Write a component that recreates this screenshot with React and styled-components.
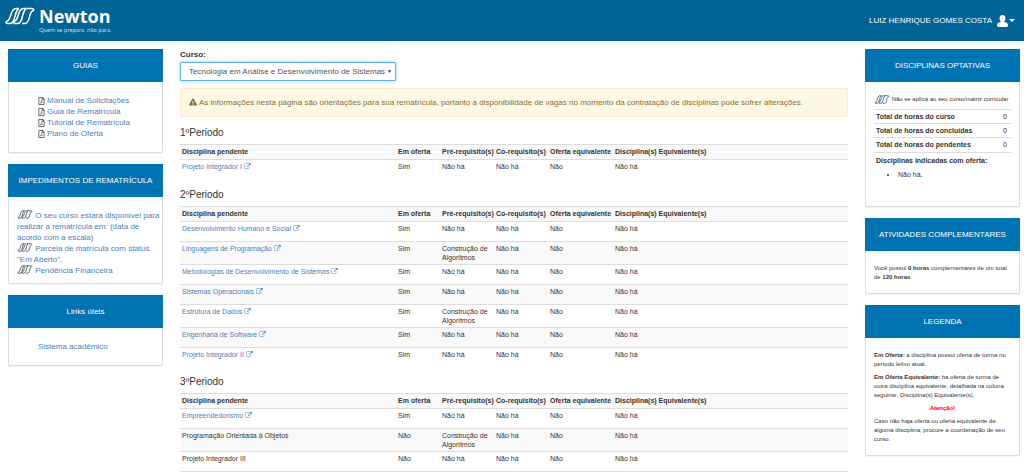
import React from "react";
import styled, { createGlobalStyle } from "styled-components";
import { FaExclamationTriangle, FaRegFilePdf } from "react-icons/fa";

const PERIODS = [
  {
    title: "1ºPeriodo",
    rows: [{ name: "Projeto Integrador I", offered: true }],
  },
  {
    title: "2ºPeriodo",
    rows: [
      { name: "Desenvolvimento Humano e Social", offered: true },
      {
        name: "Linguagens de Programação",
        offered: true,
        requires: "Construção de Algoritmos",
      },
      { name: "Metodologias de Desenvolvimento de Sistemas", offered: true },
      { name: "Sistemas Operacionais", offered: true },
      {
        name: "Estrutura de Dados",
        offered: true,
        requires: "Construção de Algoritmos",
      },
      { name: "Engenharia de Software", offered: true },
      { name: "Projeto Integrador II", offered: true },
    ],
  },
  {
    title: "3ºPeriodo",
    rows: [
      { name: "Empreendedorismo", offered: true },
      {
        name: "Programação Orientada à Objetos",
        offered: false,
        requires: "Construção de Algoritmos",
      },
      { name: "Projeto Integrador III", offered: false },
    ],
  },
];

const GUIDES = [
  "Manual de Solicitações",
  "Guia de Rematrícula",
  "Tutorial de Rematrícula",
  "Plano de Oferta",
];

const BLOCKS = [
  "O seu curso estará disponível para realizar a rematrícula em: (data de acordo com a escala)",
  'Parcela de matrícula com status "Em Aberto".',
  "Pendência Financeira",
];

const HOURS = [
  ["Total de horas do curso", 0],
  ["Total de horas do concluídas", 0],
  ["Total de horas do pendentes", 0],
];

const NewtonMark = () => (
  <svg viewBox="0 0 60 36" fill="none" stroke="currentColor" aria-hidden="true">
    <path d="M5 33 C1 33 1 29 5 28 C13 25 10 3 22 3 H28 C18 7 22 33 10 33 Z" />
    <path d="M20 33 C16 33 17 29 20 28 C28 25 25 3 37 3 H43 C33 7 37 33 25 33 Z" />
    <path d="M43 3 H54 C58 3 59 7 55 8 C47 11 51 33 40 33 H34" />
  </svg>
);

const ExternalLink = () => (
  <svg viewBox="0 0 1792 1664" fill="currentColor" aria-hidden="true">
    <path d="M1408 928v320q0 119-84.5 203.5t-203.5 84.5h-832q-119 0-203.5-84.5t-84.5-203.5v-832q0-119 84.5-203.5t203.5-84.5h704q14 0 23 9t9 23v64q0 14-9 23t-23 9h-704q-66 0-113 47t-47 113v832q0 66 47 113t113 47h832q66 0 113-47t47-113v-320q0-14 9-23t23-9h64q14 0 23 9t9 23zM1792 64v512q0 26-19 45t-45 19-45-19l-176-176-652 652q-10 10-23 10t-23-10l-114-114q-10-10-10-23t10-23l652-652-176-176q-19-19-19-45t19-45 45-19h512q26 0 45 19t19 45z" />
  </svg>
);

const Panel = ({ title, children }) => (
  <StyledPanel>
    <h2>{title}</h2>
    <div className="body">{children}</div>
  </StyledPanel>
);

const Period = ({ title, rows }) => (
  <section>
    <PeriodTitle>{title}</PeriodTitle>
    <Subjects>
      <thead>
        <tr>
          <th className="name">Disciplina pendente</th>
          <th className="offer">Em oferta</th>
          <th className="req">Pré-requisito(s)</th>
          <th className="req">Co-requisito(s)</th>
          <th className="equivalent">Oferta equivalente</th>
          <th>Disciplina(s) Equivalente(s)</th>
        </tr>
      </thead>
      <tbody>
        {rows.map((row) => (
          <tr key={row.name}>
            <td>
              {row.offered ? (
                <a href="#disciplina">
                  {row.name} <ExternalLink />
                </a>
              ) : (
                row.name
              )}
            </td>
            <td>{row.offered ? "Sim" : "Não"}</td>
            <td>{row.requires || "Não há"}</td>
            <td>Não há</td>
            <td>Não</td>
            <td>Não há</td>
          </tr>
        ))}
      </tbody>
    </Subjects>
  </section>
);

const App = () => {
  return (
    <>
      <GlobalStyle />
      <Header>
        <Brand href="#inicio">
          <NewtonMark />
          <span className="words">
            <span className="name">Newton</span>
            <span className="slogan">Quem se prepara, não para.</span>
          </span>
        </Brand>
        <UserMenu type="button">
          LUIZ HENRIQUE GOMES COSTA
          <svg className="user" viewBox="0 0 22 24" aria-hidden="true">
            <path d="M11 0 C15 0 17 3 17 7 C17 10 15.500 12.500 14 14 C18 14.500 22 16 22 20 C22 23 21 24 18 24 H4 C1 24 0 23 0 20 C0 16 4 14.500 8 14 C6.500 12.500 5 10 5 7 C5 3 7 0 11 0 Z" />
          </svg>
          <span className="caret" />
        </UserMenu>
      </Header>

      <Page>
        <Column>
          <Panel title="GUIAS">
            <GuideList>
              {GUIDES.map((guide) => (
                <li key={guide}>
                  <FaRegFilePdf />
                  <a href="#guia">{guide}</a>
                </li>
              ))}
            </GuideList>
          </Panel>
          <Panel title="IMPEDIMENTOS DE REMATRÍCULA">
            <BlockList>
              {BLOCKS.map((block) => (
                <li key={block}>
                  <NewtonMark /> <a href="#impedimento">{block}</a>
                </li>
              ))}
            </BlockList>
          </Panel>
          <Panel title="Links úteis">
            <GuideList>
              <li>
                <a href="#sistema">Sistema acadêmico</a>
              </li>
            </GuideList>
          </Panel>
        </Column>

        <main>
          <CourseField>
            <label htmlFor="curso">Curso:</label>
            <div className="control">
              <select id="curso" defaultValue="ads">
                <option value="ads">
                  Tecnologia em Análise e Desenvolvimento de Sistemas
                </option>
              </select>
            </div>
          </CourseField>
          <Alert role="alert">
            <FaExclamationTriangle />
            As informações nesta página são orientações para sua rematrícula,
            portanto a disponibilidade de vagas no momento da contratação de
            disciplinas pode sofrer alterações.
          </Alert>
          {PERIODS.map((period) => (
            <Period key={period.title} {...period} />
          ))}
        </main>

        <Column>
          <Panel title="DISCIPLINAS OPTATIVAS">
            <Optional>
              <p>
                <NewtonMark /> Não se aplica ao seu curso/matriz curricular
              </p>
              <table>
                <tbody>
                  {HOURS.map(([label, total]) => (
                    <tr key={label}>
                      <th scope="row">{label}</th>
                      <td>{total}</td>
                    </tr>
                  ))}
                </tbody>
              </table>
              <h3>Disciplinas indicadas com oferta:</h3>
              <ul>
                <li>Não há.</li>
              </ul>
            </Optional>
          </Panel>
          <Panel title="ATIVIDADES COMPLEMENTARES">
            <Notes>
              <p>
                Você possui <b>0 horas</b> complementares de um total de{" "}
                <b>120 horas</b>.
              </p>
            </Notes>
          </Panel>
          <Panel title="LEGENDA">
            <Notes>
              <p>
                <b>Em Oferta:</b> a disciplina possui oferta de turma no período
                letivo atual.
              </p>
              <p>
                <b>Em Oferta Equivalente:</b> ha oferta de turma de outra
                disciplina equivalente, detalhada na coluna seguinte,
                Disciplina(s) Equivalente(s).
              </p>
              <p className="warning">Atenção!</p>
              <p>
                Caso não haja oferta ou oferta equivalente de alguma disciplina,
                procure a coordenação de seu curso.
              </p>
            </Notes>
          </Panel>
        </Column>
      </Page>
    </>
  );
};

const GlobalStyle = createGlobalStyle`
  * {
    margin: 0;
    padding: 0;
    box-sizing: border-box;
  }
  body {
    background: #fff;
    color: #333;
    font-family: "Liberation Sans", Arial, sans-serif;
    font-size: 8px;
    line-height: 11px;
    overflow-x: hidden;
  }
  a {
    color: #4a80bd;
    text-decoration: none;
  }
  ul {
    list-style: none;
  }
`;

const Header = styled.header`
  display: flex;
  justify-content: space-between;
  align-items: center;
  height: 41px;
  padding: 0 9px 0 5px;
  background: #006496;
  color: #fff;
`;

const Brand = styled.a`
  display: flex;
  gap: 4px;
  color: #fff;
  svg {
    width: 30px;
    height: 18px;
    stroke-width: 3;
  }
  .words {
    display: flex;
    flex-direction: column;
  }
  .name {
    font: 700 18px/18px "Open Sans", sans-serif;
  }
  .slogan {
    font: 6px/10px Lato, sans-serif;
    color: #c4dbe8;
  }
`;

const UserMenu = styled.button`
  display: flex;
  align-items: center;
  border: none;
  background: transparent;
  color: #fff;
  font: inherit;
  cursor: pointer;
  .user {
    width: 11px;
    height: 12px;
    margin-left: 5px;
    fill: currentColor;
  }
  .caret {
    margin-left: 1px;
    border: 3px solid transparent;
    border-top-color: #fff;
    border-bottom: none;
  }
`;

const Page = styled.div`
  display: grid;
  grid-template-columns: 155px minmax(0, 1fr) 155px;
  gap: 17px;
  padding: 8px 4px 0 8px;
  @media (max-width: 750px) {
    grid-template-columns: 1fr;
  }
`;

const Column = styled.aside`
  display: flex;
  flex-direction: column;
  gap: 11px;
`;

const StyledPanel = styled.section`
  border: 1px solid #ddd;
  border-top: none;
  border-radius: 2px;
  box-shadow: 0 1px 1px rgba(0, 0, 0, 0.05);
  h2 {
    margin: 0 -1px;
    padding: 11px 0;
    background: #0073b3;
    color: #fff;
    font-size: 8px;
    font-weight: normal;
    text-align: center;
  }
  .body {
    padding: 13px 8px;
  }
`;

const GuideList = styled.ul`
  padding-left: 21px;
  li {
    display: flex;
    align-items: center;
    gap: 2px;
  }
  svg {
    width: 7px;
    height: 8px;
    color: #444;
  }
`;

const BlockList = styled.ul`
  margin: 0 -6px -6px 0;
  svg {
    width: 16px;
    height: 9px;
    color: #234;
    stroke-width: 3;
    vertical-align: -1px;
  }
`;

const CourseField = styled.div`
  label {
    display: block;
    margin-bottom: 2px;
    font-weight: bold;
  }
  .control {
    position: relative;
    width: 216px;
  }
  .control::after {
    content: "▼";
    position: absolute;
    right: 4px;
    top: 4px;
    font-size: 5px;
    pointer-events: none;
  }
  select {
    display: block;
    width: 100%;
    height: 19px;
    padding: 0 0 0 8px;
    appearance: none;
    border: 1px solid #66afe9;
    border-radius: 1px;
    background: #fff;
    box-shadow: 0 0 4px rgba(102, 175, 233, 0.6);
    color: #555;
    font: inherit;
  }
`;

const Alert = styled.div`
  margin: 7px 0 10px;
  padding: 8px;
  border: 1px solid #faebcc;
  border-radius: 2px;
  background: #fcf8e3;
  color: #8a6d3b;
  svg {
    width: 8px;
    height: 8px;
    margin-right: 2px;
    vertical-align: -1px;
  }
`;

const PeriodTitle = styled.h2`
  padding-bottom: 5px;
  font-size: 10px;
  font-weight: normal;
  line-height: 12px;
`;

const Subjects = styled.table`
  width: 100%;
  margin-bottom: 9px;
  table-layout: fixed;
  border-collapse: collapse;
  font-size: 7px;
  line-height: 9px;
  section:last-child > & {
    border-bottom: 2px solid #ddd;
  }
  .name {
    width: 216px;
  }
  .offer {
    width: 44px;
  }
  .req {
    width: 54px;
  }
  .equivalent {
    width: 65px;
  }
  th,
  td {
    padding: 2px 0 2px 2px;
    border-top: 1px solid #ddd;
    text-align: left;
    vertical-align: top;
  }
  th {
    height: 15px;
    white-space: nowrap;
  }
  td {
    height: 20px;
  }
  thead tr,
  tbody tr:nth-child(even) {
    background: #f9f9f9;
  }
  svg {
    width: 7px;
    height: 6px;
  }
`;

const Optional = styled.div`
  font-size: 7px;
  line-height: 9px;
  p {
    margin-bottom: 5px;
    font-size: 6px;
    white-space: nowrap;
  }
  svg {
    width: 16px;
    height: 9px;
    color: #146;
    stroke-width: 3;
    vertical-align: middle;
  }
  table {
    width: 100%;
    border-collapse: collapse;
  }
  th,
  td {
    height: 14px;
    padding: 0 2px;
    border-top: 1px solid #ddd;
    text-align: left;
  }
  h3 {
    padding: 3px 2px;
    border-top: 1px solid #ddd;
    font-size: 7px;
  }
  ul {
    padding: 2px 0 14px 24px;
    list-style: disc;
  }
`;

const Notes = styled.div`
  margin-bottom: -2px;
  font-size: 6px;
  line-height: 9px;
  p + p {
    margin-top: 4px;
  }
  .warning {
    color: #f00;
    font-weight: bold;
    text-align: center;
  }
`;

export default App;
